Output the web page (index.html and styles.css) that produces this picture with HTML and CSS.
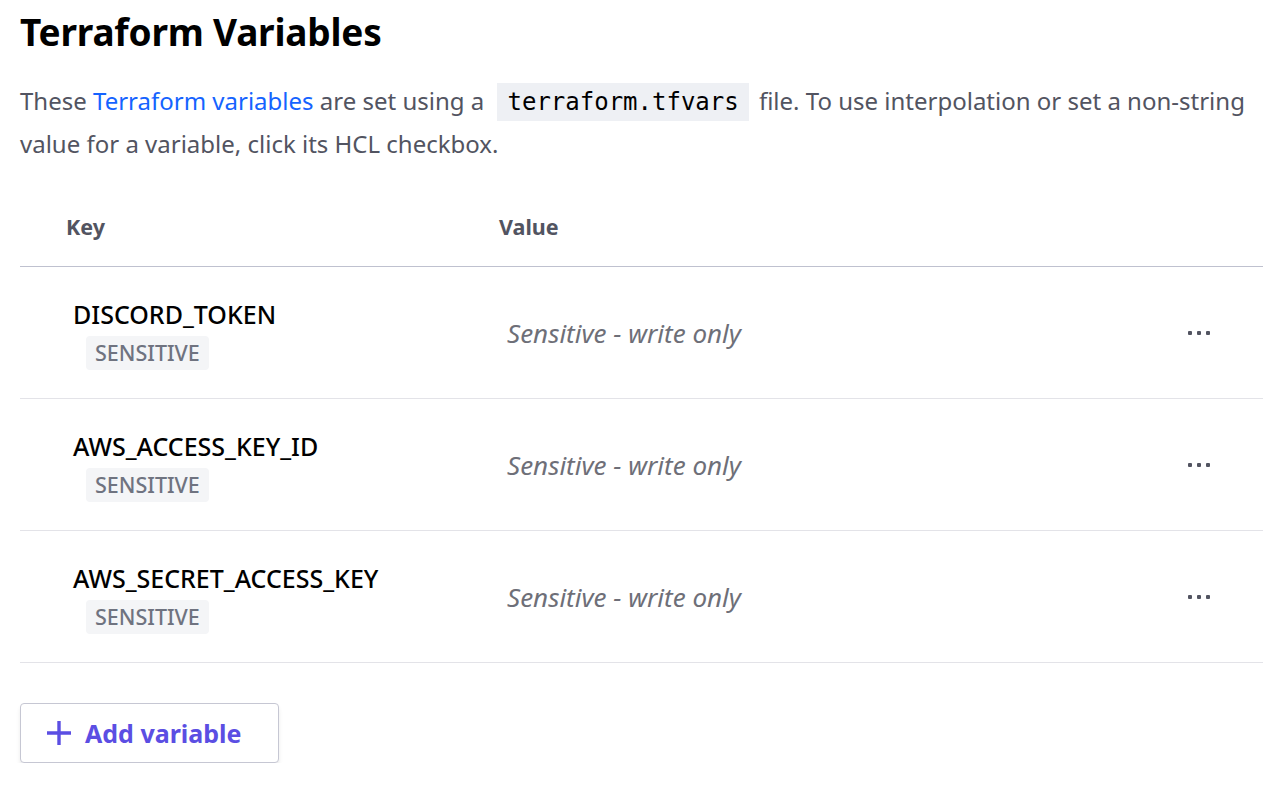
FILE: index.html
```html
<!DOCTYPE html>
<html>
<head>
<meta charset="utf-8">
<link rel="stylesheet" href="styles.css">
</head>
<body>
<main class="page">
  <h1 class="title">Terraform Variables</h1>
  <p class="intro">These <a class="link" href="#">Terraform variables</a> are set using a <code class="code">terraform.tfvars</code> file. To use interpolation or set a non-string value for a variable, click its HCL checkbox.</p>
  <div class="table">
    <div class="head">
      <div class="col-key">Key</div>
      <div class="col-val">Value</div>
    </div>
    <div class="row">
      <div class="key-cell"><div class="key">DISCORD_TOKEN</div><span class="badge">SENSITIVE</span></div>
      <div class="val">Sensitive - write only</div>
      <div class="more"><span></span><span></span><span></span></div>
    </div>
    <div class="row">
      <div class="key-cell"><div class="key">AWS_ACCESS_KEY_ID</div><span class="badge">SENSITIVE</span></div>
      <div class="val">Sensitive - write only</div>
      <div class="more"><span></span><span></span><span></span></div>
    </div>
    <div class="row">
      <div class="key-cell"><div class="key">AWS_SECRET_ACCESS_KEY</div><span class="badge">SENSITIVE</span></div>
      <div class="val">Sensitive - write only</div>
      <div class="more"><span></span><span></span><span></span></div>
    </div>
  </div>
  <button class="add-btn"><svg class="plus" width="26" height="26" viewBox="0 0 26 26"><path d="M13 1v24M1 13h24" stroke="currentColor" stroke-width="3.4" fill="none"/></svg><span>Add variable</span></button>
</main>
</body>
</html>
```
FILE: styles.css
```css
html, body { margin: 0; padding: 0; background: #fff; }
body { font-family: "Noto Sans", "Open Sans", sans-serif; color: #525461; }
.page { padding: 8px 20px 0 20px; }
.title { margin: 0; font-size: 37px; font-weight: 700; color: #000; line-height: 48px; letter-spacing: -0.2px; }
.intro { margin: 24px 0 0 0; font-size: 24px; line-height: 41px; color: #525461; max-width: 1243px; }
.link { color: #1563ff; text-decoration: none; }
.code { font-family: "DejaVu Sans Mono", "Liberation Mono", monospace; font-size: 24px; color: #000; background: #eef0f4; padding: 5px 10px; margin: 0 4px 0 7px; }
.table { margin-top: 22px; }
.head { display: flex; align-items: center; height: 80px; border-bottom: 1px solid #bfc1cf; font-weight: 700; font-size: 21.5px; color: #525461; }
.col-key { width: 433px; padding-left: 46px; }
.col-val { flex: 1; }
.row { display: flex; align-items: center; height: 131px; border-bottom: 1px solid #e3e3e8; }
.key-cell { width: 434px; padding-left: 53px; display: flex; flex-direction: column; align-items: flex-start; margin-top: 4px; }
.key { color: #000; font-size: 25px; font-weight: 500; line-height: 30px; }
.badge { margin-left: 13px; margin-top: 7px; background: #f4f5f7; color: #6f7380; font-size: 21.5px; font-weight: 500; padding: 2px 9px; border-radius: 4px; line-height: 30px; }
.val { flex: 1; font-style: italic; font-size: 26px; color: #6e6f78; }
.more { display: flex; gap: 5px; padding-right: 53px; }
.more span { width: 4px; height: 4px; background: #525461; border-radius: 1px; }
.add-btn { margin-top: 40px; display: flex; align-items: center; gap: 13px; height: 60px; width: 259px; padding: 0 0 0 25px; background: #fff; border: 1px solid #c6c7d3; border-radius: 4px; box-shadow: 0 4px 4px rgba(0,0,0,0.08); font-family: "Noto Sans", sans-serif; font-size: 25px; font-weight: 700; color: #5b4ee3; cursor: pointer; }
.plus { color: #5b4ee3; }
```
